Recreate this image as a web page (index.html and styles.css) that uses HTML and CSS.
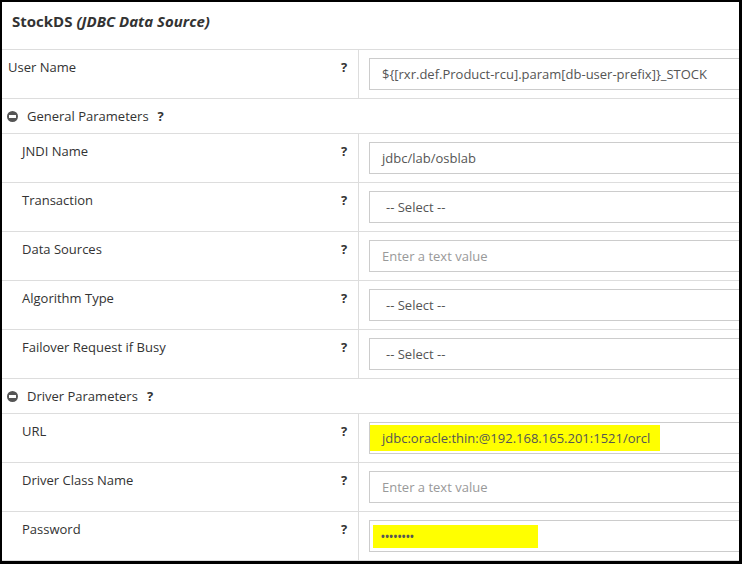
FILE: index.html
```html
<!DOCTYPE html>
<html>
<head>
<meta charset="utf-8">
<link rel="stylesheet" href="styles.css">
</head>
<body>
<div class="frame">
  <div class="title"><b>StockDS</b> <b><i>(JDBC Data Source)</i></b></div>

  <div class="row">
    <div class="lcell"><span class="label">User Name</span><span class="q">?</span></div>
    <div class="rcell"><div class="field value">${[rxr.def.Product-rcu].param[db-user-prefix]}_STOCK</div></div>
  </div>

  <div class="section">
    <span class="minus"></span><span class="stitle">General Parameters</span><span class="q">?</span>
  </div>

  <div class="row">
    <div class="lcell ind"><span class="label">JNDI Name</span><span class="q">?</span></div>
    <div class="rcell"><div class="field value">jdbc/lab/osblab</div></div>
  </div>
  <div class="row">
    <div class="lcell ind"><span class="label">Transaction</span><span class="q">?</span></div>
    <div class="rcell"><div class="field select">-- Select --</div></div>
  </div>
  <div class="row">
    <div class="lcell ind"><span class="label">Data Sources</span><span class="q">?</span></div>
    <div class="rcell"><div class="field ph">Enter a text value</div></div>
  </div>
  <div class="row">
    <div class="lcell ind"><span class="label">Algorithm Type</span><span class="q">?</span></div>
    <div class="rcell"><div class="field select">-- Select --</div></div>
  </div>
  <div class="row">
    <div class="lcell ind"><span class="label">Failover Request if Busy</span><span class="q">?</span></div>
    <div class="rcell"><div class="field select">-- Select --</div></div>
  </div>

  <div class="section">
    <span class="minus"></span><span class="stitle">Driver Parameters</span><span class="q">?</span>
  </div>

  <div class="row">
    <div class="lcell ind"><span class="label">URL</span><span class="q">?</span></div>
    <div class="rcell"><div class="field hl-field"><span class="hl-url">jdbc:oracle:thin:@192.168.165.201:1521/orcl</span></div></div>
  </div>
  <div class="row">
    <div class="lcell ind"><span class="label">Driver Class Name</span><span class="q">?</span></div>
    <div class="rcell"><div class="field ph">Enter a text value</div></div>
  </div>
  <div class="row">
    <div class="lcell ind"><span class="label">Password</span><span class="q">?</span></div>
    <div class="rcell"><div class="field hl-field"><span class="hl-pw">••••••••</span></div></div>
  </div>
</div>
</body>
</html>
```
FILE: styles.css
```css
html, body {
  margin: 0;
  padding: 0;
  background: #fff;
}
.frame {
  box-sizing: border-box;
  width: 742px;
  height: 564px;
  border-top: 2px solid #000;
  border-left: 2px solid #000;
  border-right: 3px solid #000;
  border-bottom: 3px solid #000;
  overflow: hidden;
  font-family: "Open Sans", "Liberation Sans", sans-serif;
  font-size: 13px;
  color: #333;
}
.title {
  box-sizing: border-box;
  height: 48px;
  border-bottom: 1px solid #ddd;
  padding: 9px 0 0 10px;
  font-size: 15px;
  line-height: 20px;
  display: flex;
  gap: 4px;
  color: #333;
}
.row {
  display: flex;
  height: 48px;
  border-bottom: 1px solid #ddd;
}
.lcell {
  width: 350px;
  flex: none;
  display: flex;
  padding: 8px 0 0 6px;
  line-height: 18px;
  border-right: 1px solid #ddd;
}
.lcell.ind {
  padding-left: 20px;
  width: 336px;
}
.label {
  flex: 1;
}
.q {
  font-weight: bold;
  color: #333;
  width: 17px;
}
.rcell {
  flex: none;
  width: 420px;
  padding: 8px 0 0 10px;
}
.field {
  box-sizing: border-box;
  height: 32px;
  border: 1px solid #ccc;
  padding: 0 0 0 12px;
  display: flex;
  align-items: center;
  font-size: 13px;
}
.value {
  color: #555;
}
.select {
  color: #555;
  padding-left: 16px;
}
.ph {
  color: #999;
}
.hl-field {
  padding: 0;
  align-items: center;
}
.hl-url {
  background: #ffff00;
  color: #555;
  height: 26px;
  width: 278px;
  padding-left: 12px;
  display: flex;
  align-items: center;
}
.hl-pw {
  background: #ffff00;
  color: #555;
  height: 23px;
  width: 157px;
  margin-left: 3px;
  padding-left: 8px;
  display: flex;
  align-items: center;
  font-size: 10px;
  font-weight: bold;
  letter-spacing: 0.4px;
}
.section {
  height: 34px;
  border-bottom: 1px solid #ddd;
  display: flex;
  align-items: center;
  padding-left: 5px;
}
.minus {
  width: 11px;
  height: 11px;
  border-radius: 50%;
  background: #555;
  position: relative;
  margin-right: 9px;
  flex: none;
}
.minus::after {
  content: "";
  position: absolute;
  left: 2px;
  right: 2px;
  top: 4px;
  height: 3px;
  background: #fff;
}
.stitle {
  margin-right: 9px;
}
.section .q {
  width: auto;
}
```
